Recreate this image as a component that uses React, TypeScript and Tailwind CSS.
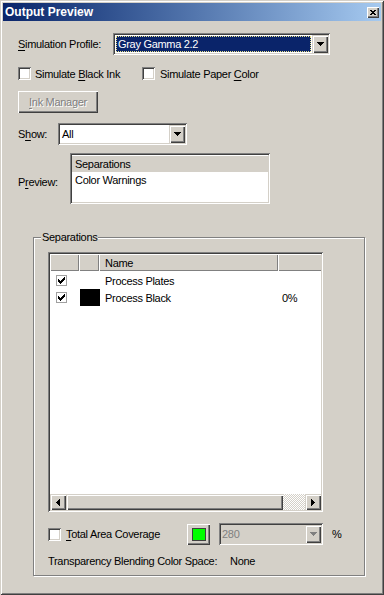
import React from "react"

const sunken = "shadow-[inset_1px_1px_0_#808080,inset_-1px_-1px_0_#fff,inset_2px_2px_0_#404040,inset_-2px_-2px_0_#d4d0c8]"
const raised = "shadow-[inset_1px_1px_0_#fff,inset_-1px_-1px_0_#404040,inset_-2px_-2px_0_#808080]"
const arrowBtn = "shadow-[inset_1px_1px_0_#d4d0c8,inset_2px_2px_0_#fff,inset_-1px_-1px_0_#404040,inset_-2px_-2px_0_#808080]"

const U = ({ children }: { children: React.ReactNode }) => (
    <span className="underline underline-offset-[2px]">{children}</span>
)

const DownArrow = ({ color = "#000" }: { color?: string }) => (
    <svg width="7" height="4" shapeRendering="crispEdges" fill={color}>
        <rect x="0" y="0" width="7" height="1" />
        <rect x="1" y="1" width="5" height="1" />
        <rect x="2" y="2" width="3" height="1" />
        <rect x="3" y="3" width="1" height="1" />
    </svg>
)

const SideArrow = ({ dir }: { dir: 'left' | 'right' }) => (
    <svg width="4" height="7" shapeRendering="crispEdges" fill="#000" className={dir === 'right' ? '' : 'rotate-180'}>
        <rect x="0" y="0" width="1" height="7" />
        <rect x="1" y="1" width="1" height="5" />
        <rect x="2" y="2" width="1" height="3" />
        <rect x="3" y="3" width="1" height="1" />
    </svg>
)

const Checkbox = () => <div className={`w-[13px] h-[13px] shrink-0 bg-white ${sunken}`} />

const ListCheck = () => (
    <div className="w-[11px] h-[11px] bg-white border border-[#a0a0a0] flex items-center justify-center">
        <svg width="7" height="7" shapeRendering="crispEdges" fill="#000">
            <rect x="0" y="2" width="1" height="3" />
            <rect x="1" y="3" width="1" height="3" />
            <rect x="2" y="4" width="1" height="3" />
            <rect x="3" y="3" width="1" height="3" />
            <rect x="4" y="2" width="1" height="3" />
            <rect x="5" y="1" width="1" height="3" />
            <rect x="6" y="0" width="1" height="3" />
        </svg>
    </div>
)

const ArrowButton = ({ disabled }: { disabled?: boolean }) => (
    <div className={`w-[16px] h-full flex items-center justify-center bg-[#d4d0c8] ${arrowBtn}`}>
        <DownArrow color={disabled ? "#808080" : "#000"} />
    </div>
)

const App = () => {
    return (
        <div className="w-[384px] h-[595px] bg-[#d4d0c8] p-[3px] flex flex-col text-[11px] leading-[14px] tracking-[-0.3px] text-black font-['Liberation_Sans',Arial,sans-serif] shadow-[inset_1px_1px_0_#d4d0c8,inset_-1px_-1px_0_#404040,inset_2px_2px_0_#fff,inset_-2px_-2px_0_#808080]">
            {/* title bar */}
            <div className="h-[18px] shrink-0 flex items-center justify-between pl-[2px] pr-[2px] bg-linear-to-r from-[#0a246a] to-[#a6caf0]">
                <span className="text-white font-bold text-[12px] tracking-normal">Output Preview</span>
                <div className={`w-[12px] h-[11px] bg-[#d4d0c8] flex items-center justify-center ${raised}`}>
                    <svg width="6" height="5" shapeRendering="crispEdges" fill="#000">
                        <rect x="0" y="0" width="2" height="1" /><rect x="4" y="0" width="2" height="1" />
                        <rect x="1" y="1" width="4" height="1" />
                        <rect x="2" y="2" width="2" height="1" />
                        <rect x="1" y="3" width="4" height="1" />
                        <rect x="0" y="4" width="2" height="1" /><rect x="4" y="4" width="2" height="1" />
                    </svg>
                </div>
            </div>

            <div className="flex flex-col pl-[15px]">
                {/* simulation profile */}
                <div className="mt-[12px] flex items-center h-[22px]">
                    <span className="w-[95px]"><U>S</U>imulation Profile:</span>
                    <div className={`w-[217px] h-[22px] p-[2px] flex bg-white ${sunken}`}>
                        <div className="flex-1 p-[1px]">
                            <div className="h-full bg-[#0a246a] border border-dotted border-[#e8e088] text-white flex items-center pl-[1px]">Gray Gamma 2.2</div>
                        </div>
                        <ArrowButton />
                    </div>
                </div>

                {/* simulate checkboxes */}
                <div className="mt-[12px] flex items-center h-[13px]">
                    <div className="w-[124px] flex items-center gap-[4px]">
                        <Checkbox />
                        <span>Simulate <U>B</U>lack Ink</span>
                    </div>
                    <div className="flex items-center gap-[5px]">
                        <Checkbox />
                        <span>Simulate Paper <U>C</U>olor</span>
                    </div>
                </div>

                {/* ink manager */}
                <div className={`mt-[11px] w-[80px] h-[22px] flex items-center justify-center text-[#808080] [text-shadow:1px_1px_0_#fff] ${raised}`}>
                    <span><U>I</U>nk Manager</span>
                </div>

                {/* show */}
                <div className="mt-[10px] flex items-center h-[22px]">
                    <span className="w-[40px]">S<U>h</U>ow:</span>
                    <div className={`w-[129px] h-[22px] p-[2px] flex bg-white ${sunken}`}>
                        <div className="flex-1 flex items-center pl-[2px]">All</div>
                        <ArrowButton />
                    </div>
                </div>

                {/* preview */}
                <div className="mt-[8px] flex">
                    <span className="w-[52px] pt-[22px]">P<U>r</U>eview:</span>
                    <div className={`w-[200px] h-[51px] p-[2px] bg-white ${sunken}`}>
                        <div className="h-[16px] bg-[#d4d0c8] flex items-center pl-[3px] mt-[1px]">Separations</div>
                        <div className="h-[16px] flex items-center pl-[3px]">Color Warnings</div>
                    </div>
                </div>

                {/* separations group */}
                <div className="mt-[33px] ml-[15px] w-[332px] h-[339px] relative border border-[#808080] shadow-[inset_1px_1px_0_#fff,1px_1px_0_#fff] pl-[14px] pt-[14px] flex flex-col">
                    <span className="absolute top-[-8px] left-[7px] px-[1px] bg-[#d4d0c8]">Separations</span>

                    <div className={`w-[275px] h-[260px] p-[2px] bg-white flex flex-col ${sunken}`}>
                        <div className="h-[17px] flex shrink-0 bg-[#d4d0c8]">
                            <div className="w-[29px] shadow-[inset_1px_1px_0_#fff,inset_-1px_-1px_0_#808080]" />
                            <div className="w-[20px] shadow-[inset_1px_1px_0_#fff,inset_-1px_-1px_0_#808080]" />
                            <div className="w-[179px] pl-[6px] flex items-center shadow-[inset_1px_1px_0_#fff,inset_-1px_-1px_0_#808080]">Name</div>
                            <div className="flex-1 shadow-[inset_1px_1px_0_#fff,inset_0_-1px_0_#808080]" />
                        </div>
                        <div className="flex-1 pt-[1px]">
                            <div className="h-[17px] flex items-center">
                                <div className="w-[29px] pl-[6px]"><ListCheck /></div>
                                <div className="w-[20px]" />
                                <div className="w-[179px] pl-[6px]">Process Plates</div>
                            </div>
                            <div className="h-[17px] flex items-center">
                                <div className="w-[29px] pl-[6px]"><ListCheck /></div>
                                <div className="w-[20px] pl-[1px] h-full"><div className="w-[20px] h-full bg-black" /></div>
                                <div className="w-[179px] pl-[6px]">Process Black</div>
                                <div className="pl-[4px]">0%</div>
                            </div>
                        </div>
                        <div className="h-[16px] flex shrink-0">
                            <div className={`w-[16px] flex items-center justify-center bg-[#d4d0c8] ${arrowBtn}`}><SideArrow dir="left" /></div>
                            <div className={`w-[217px] bg-[#d4d0c8] ${arrowBtn}`} />
                            <div className="flex-1 bg-[image:repeating-conic-gradient(#fff_0_25%,#d4d0c8_0_50%)] bg-[length:2px_2px]" />
                            <div className={`w-[16px] flex items-center justify-center bg-[#d4d0c8] ${arrowBtn}`}><SideArrow dir="right" /></div>
                        </div>
                    </div>

                    {/* total area coverage */}
                    <div className="mt-[11px] flex items-center h-[22px]">
                        <div className="w-[139px] flex items-center gap-[5px]">
                            <Checkbox />
                            <span><U>T</U>otal Area Coverage</span>
                        </div>
                        <div className={`w-[23px] h-[21px] flex items-center justify-center bg-[#d4d0c8] ${raised}`}>
                            <div className="w-[14px] h-[13px] bg-[#00ff00] border border-[#404040]" />
                        </div>
                        <div className={`ml-[9px] w-[104px] h-[22px] p-[2px] flex bg-[#d4d0c8] ${sunken}`}>
                            <div className="flex-1 flex items-center pl-[1px] text-[#808080]">280</div>
                            <ArrowButton disabled />
                        </div>
                        <span className="ml-[9px]">%</span>
                    </div>

                    {/* blending space */}
                    <div className="mt-[9px] flex">
                        <span className="w-[182px]">Transparency Blending Color Space:</span>
                        <span>None</span>
                    </div>
                </div>
            </div>
        </div>
    )
}

export default App
